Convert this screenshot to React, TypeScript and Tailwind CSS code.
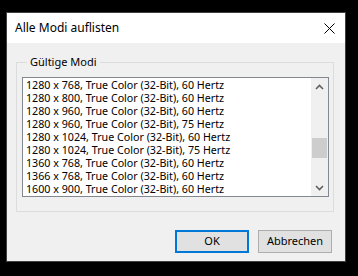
const modes = [
  "1280 x 768, True Color (32-Bit), 60 Hertz",
  "1280 x 800, True Color (32-Bit), 60 Hertz",
  "1280 x 960, True Color (32-Bit), 60 Hertz",
  "1280 x 960, True Color (32-Bit), 75 Hertz",
  "1280 x 1024, True Color (32-Bit), 60 Hertz",
  "1280 x 1024, True Color (32-Bit), 75 Hertz",
  "1360 x 768, True Color (32-Bit), 60 Hertz",
  "1366 x 768, True Color (32-Bit), 60 Hertz",
  "1600 x 900, True Color (32-Bit), 60 Hertz",
];

export default function App() {
  return (
    <div
      className="w-[358px] h-[276px] bg-black pt-[12px] pl-[6px] text-[10.7px] text-black"
      style={{ fontFamily: '"Noto Sans", "Open Sans", sans-serif' }}
    >
      <div className="w-[340px] h-[250px] border border-[#3f3f3f] bg-[#f0f0f0] flex flex-col">
        {/* Title bar */}
        <div className="h-[30px] bg-white flex items-center justify-between pl-[8px] pr-[10px]">
          <span className="text-[12px]">Alle Modi auflisten</span>
          <svg width="11" height="11" viewBox="0 0 11 11">
            <path d="M0.5 0.5 L10.5 10.5 M10.5 0.5 L0.5 10.5" stroke="#000" strokeWidth="1" />
          </svg>
        </div>

        {/* Group box */}
        <fieldset className="mt-[12px] ml-[9px] mr-[11px] border border-[#dcdcdc] pl-[5px] pr-[4px] pb-[14px] pt-[8px]">
          <legend className="ml-[5px] px-[3px] leading-[14px] text-[11px]">Gültige Modi</legend>
          <div className="h-[120px] border border-[#828790] bg-white flex">
            <div className="flex-1 pt-[1px] pl-[3px]">
              {modes.map((m, i) => (
                <div key={i} className="h-[13px] leading-[13px] whitespace-nowrap">
                  {m}
                </div>
              ))}
            </div>
            <div className="w-[17px] bg-[#f0f0f0] flex flex-col items-center">
              <div className="h-[17px] flex items-center justify-center">
                <svg width="9" height="6" viewBox="0 0 9 6">
                  <path d="M1 5 L4.5 1.5 L8 5" fill="none" stroke="#606060" strokeWidth="1.6" />
                </svg>
              </div>
              <div className="flex-1 w-full px-[1px] pt-[43px]">
                <div className="h-[20px] bg-[#cdcdcd]" />
              </div>
              <div className="h-[17px] flex items-center justify-center">
                <svg width="9" height="6" viewBox="0 0 9 6">
                  <path d="M1 1 L4.5 4.5 L8 1" fill="none" stroke="#606060" strokeWidth="1.6" />
                </svg>
              </div>
            </div>
          </div>
        </fieldset>

        {/* Buttons */}
        <div className="flex justify-end gap-[9px] mt-[18px] mr-[13px]">
          <button className="w-[74px] h-[23px] border-2 border-[#0078d7] bg-[#e1e1e1] text-[11px]">
            OK
          </button>
          <button className="w-[74px] h-[23px] border border-[#adadad] bg-[#e1e1e1] text-[11px]">
            Abbrechen
          </button>
        </div>
      </div>
    </div>
  );
}
